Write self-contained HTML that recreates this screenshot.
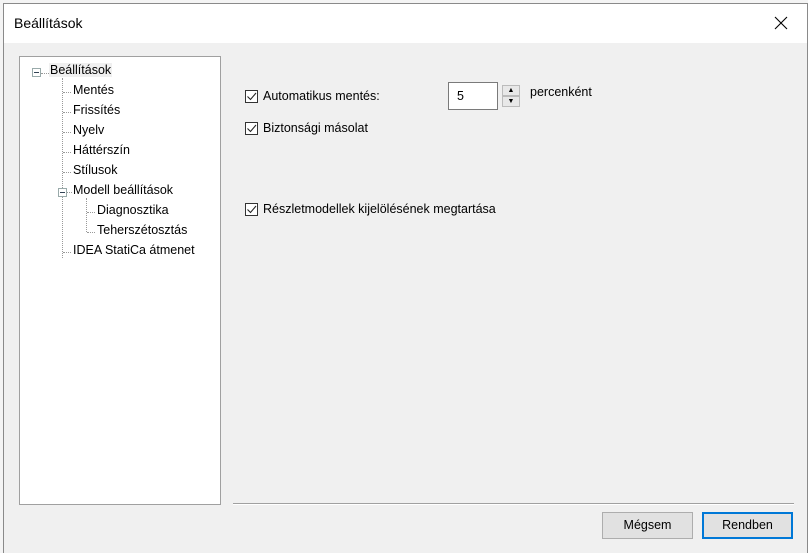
<!DOCTYPE html>
<html><head><style>
body{margin:0;width:808px;height:552px;background:#f4f4f4;position:relative;overflow:hidden;font-family:"Liberation Sans",sans-serif;font-size:12.5px;color:#000}
.win{position:absolute;left:3px;top:3px;width:803px;height:549px;border:1px solid #8a8a8a;border-bottom:none;background:#f0f0f0}
.title{position:absolute;left:0;top:0;width:803px;height:39px;background:#fff}
.title span{position:absolute;left:10px;top:11px;font-size:14px}
.x{position:absolute;left:770px;top:12px}
.tree{position:absolute;left:15px;top:52px;width:200px;height:447px;background:#fff;border:1px solid #a0a0a0}
.t{position:absolute;white-space:nowrap}
.dv{position:absolute;border-left:1px dotted #999;width:0}
.dh{position:absolute;border-top:1px dotted #999;height:0}
.pm{position:absolute;width:9px;height:9px;border:1px solid #9aa;background:#fff;box-sizing:border-box}
.pm:after{content:"";position:absolute;left:1px;top:3px;width:5px;height:1px;background:#345}
.cb{position:absolute;width:13px;height:13px;border:1px solid #333;background:#fff;box-sizing:border-box}
.btn{position:absolute;top:508px;width:91px;height:27px;box-sizing:border-box;background:#e1e1e1;border:1px solid #adadad;text-align:center;line-height:25px}
</style></head><body>
<div class="win">
<div class="title"><span>Beállítások</span>
<svg class="x" width="14" height="14"><path d="M1 1L13 13M13 1L1 13" stroke="#000" stroke-width="1.1"/></svg></div>
<div class="tree">
<div class="pm" style="left:12px;top:11px"></div>
<div class="t" style="left:29px;top:6px;background:#f0f0f0;padding:0 1px">Beállítások</div>
<div class="dh" style="left:21px;top:16px;width:8px"></div>
<div class="dv" style="left:42px;top:21px;height:180px"></div>
<div class="dh" style="left:43px;top:35px;width:8px"></div><div class="t" style="left:53px;top:26px">Mentés</div>
<div class="dh" style="left:43px;top:55px;width:8px"></div><div class="t" style="left:53px;top:46px">Frissítés</div>
<div class="dh" style="left:43px;top:75px;width:8px"></div><div class="t" style="left:53px;top:66px">Nyelv</div>
<div class="dh" style="left:43px;top:95px;width:8px"></div><div class="t" style="left:53px;top:86px">Háttérszín</div>
<div class="dh" style="left:43px;top:115px;width:8px"></div><div class="t" style="left:53px;top:106px">Stílusok</div>
<div class="pm" style="left:38px;top:131px"></div><div class="dh" style="left:47px;top:135px;width:5px"></div><div class="t" style="left:53px;top:126px">Modell beállítások</div>
<div class="dv" style="left:66px;top:141px;height:34px"></div>
<div class="dh" style="left:67px;top:155px;width:8px"></div><div class="t" style="left:77px;top:146px">Diagnosztika</div>
<div class="dh" style="left:67px;top:175px;width:8px"></div><div class="t" style="left:77px;top:166px">Teherszétosztás</div>
<div class="dh" style="left:43px;top:195px;width:8px"></div><div class="t" style="left:53px;top:186px">IDEA StatiCa átmenet</div>
</div>
<div class="cb" style="left:241px;top:86px"><svg width="11" height="11"><path d="M1.5 5.5L4.5 8.5L10 2" stroke="#222" fill="none" stroke-width="1.1"/></svg></div>
<div class="t" style="left:259px;top:85px">Automatikus mentés:</div>
<div style="position:absolute;left:444px;top:78px;width:50px;height:28px;box-sizing:border-box;background:#fff;border:1px solid #7a7a7a"><span style="position:absolute;left:8px;top:6px">5</span></div>
<div style="position:absolute;left:498px;top:81px;width:18px;height:11px;box-sizing:border-box;border:1px solid #bbb;background:#e8e8e8;font-size:7px;text-align:center;line-height:9px">▲</div>
<div style="position:absolute;left:498px;top:92px;width:18px;height:11px;box-sizing:border-box;border:1px solid #bbb;background:#e8e8e8;font-size:7px;text-align:center;line-height:9px">▼</div>
<div class="t" style="left:526px;top:81px">percenként</div>
<div class="cb" style="left:241px;top:118px"><svg width="11" height="11"><path d="M1.5 5.5L4.5 8.5L10 2" stroke="#222" fill="none" stroke-width="1.1"/></svg></div>
<div class="t" style="left:259px;top:117px">Biztonsági másolat</div>
<div class="cb" style="left:241px;top:199px"><svg width="11" height="11"><path d="M1.5 5.5L4.5 8.5L10 2" stroke="#222" fill="none" stroke-width="1.1"/></svg></div>
<div class="t" style="left:259px;top:198px">Részletmodellek kijelölésének megtartása</div>
<div style="position:absolute;left:229px;top:499px;width:561px;height:1px;background:#a0a0a0;border-bottom:1px solid #fff"></div>
<div class="btn" style="left:598px">Mégsem</div>
<div class="btn" style="left:698px;border:2px solid #0078d7;line-height:23px">Rendben</div>
</div>
</body></html>
